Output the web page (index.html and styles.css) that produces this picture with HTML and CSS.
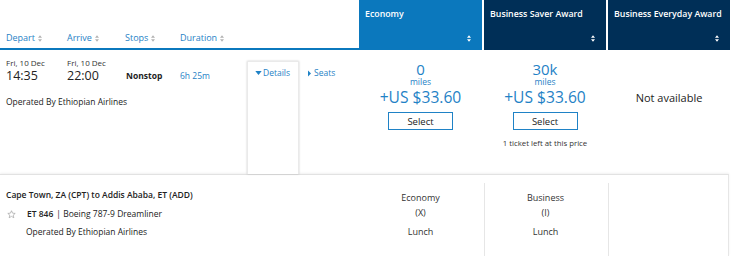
FILE: index.html
```html
<!DOCTYPE html>
<html lang="en">
<head>
    <meta charset="UTF-8">
    <meta name="viewport" content="width=device-width, initial-scale=1.0">
    <title>Flight results</title>
    <link rel="stylesheet" href="styles.css">
</head>
<body>
    <div class="results">
        <div class="head">
            <div class="sort-bar">
                <span class="sort">Depart <svg class="arrows" viewBox="0 0 5 8"><path d="M2.5 0 5 3H0zM2.5 8 0 5h5z"/></svg></span>
                <span class="sort">Arrive <svg class="arrows" viewBox="0 0 5 8"><path d="M2.5 0 5 3H0zM2.5 8 0 5h5z"/></svg></span>
                <span class="sort">Stops <svg class="arrows" viewBox="0 0 5 8"><path d="M2.5 0 5 3H0zM2.5 8 0 5h5z"/></svg></span>
                <span class="sort">Duration <svg class="arrows" viewBox="0 0 5 8"><path d="M2.5 0 5 3H0zM2.5 8 0 5h5z"/></svg></span>
            </div>
            <div class="fare-head economy">
                <span>Economy</span>
                <svg class="arrows" viewBox="0 0 5 8"><path d="M2.5 0 5 3H0zM2.5 8 0 5h5z"/></svg>
            </div>
            <div class="fare-head navy">
                <span>Business Saver Award</span>
                <svg class="arrows" viewBox="0 0 5 8"><path d="M2.5 0 5 3H0zM2.5 8 0 5h5z"/></svg>
            </div>
            <div class="fare-head navy">
                <span>Business Everyday Award</span>
                <svg class="arrows" viewBox="0 0 5 8"><path d="M2.5 0 5 3H0zM2.5 8 0 5h5z"/></svg>
            </div>
        </div>

        <div class="flight">
            <div class="info">
                <div class="time">
                    <small>Fri, 10 Dec</small>
                    <strong>14:35</strong>
                </div>
                <div class="time">
                    <small>Fri, 10 Dec</small>
                    <strong>22:00</strong>
                </div>
                <div class="stops">Nonstop</div>
                <div class="duration">6h 25m</div>
                <div class="details-tab">
                    <a class="toggle"><svg class="caret" viewBox="0 0 8 5"><path d="M0 0h8L4 5z"/></svg>Details</a>
                </div>
                <a class="toggle seats"><svg class="caret-right" viewBox="0 0 4 8"><path d="M0 0l4 4-4 4z"/></svg>Seats</a>
                <div class="operator">Operated By Ethiopian Airlines</div>
            </div>

            <div class="fare">
                <span class="miles">0</span>
                <span class="miles-label">miles</span>
                <span class="price">+US $33.60</span>
                <button class="select">Select</button>
            </div>
            <div class="fare">
                <span class="miles">30k</span>
                <span class="miles-label">miles</span>
                <span class="price">+US $33.60</span>
                <button class="select">Select</button>
                <span class="left">1 ticket left at this price</span>
            </div>
            <div class="fare unavailable">Not available</div>
        </div>

        <div class="detail">
            <div class="segment">
                <div class="route">Cape Town, ZA (CPT) to Addis Ababa, ET (ADD)</div>
                <div class="plane">
                    <svg class="star" viewBox="0 0 10 10"><path d="M5 .8l1.2 2.7 2.9.3-2.2 1.9.7 2.9L5 7.1 2.4 8.6l.7-2.9L.9 3.8l2.9-.3z"/></svg>
                    <b>ET 846</b> | Boeing 787-9 Dreamliner
                </div>
                <div class="operated">Operated By Ethiopian Airlines</div>
            </div>
            <div class="cabin">
                <span>Economy</span>
                <span>(X)</span>
                <span class="meal">Lunch</span>
            </div>
            <div class="cabin">
                <span>Business</span>
                <span>(I)</span>
                <span class="meal">Lunch</span>
            </div>
            <div class="cabin"></div>
        </div>
    </div>
</body>
</html>
```

FILE: styles.css
```css
body {
    margin: 0;
    font-family: "Open Sans", "Liberation Sans", sans-serif;
    color: #222;
    background: #fff;
}

.results {
    width: 730px;
}

.head,
.flight,
.detail {
    display: grid;
    grid-template-columns: 357px 123px 122px 122px;
    column-gap: 2px;
}

/* header */

.head {
    height: 50px;
}

.sort-bar {
    display: grid;
    grid-template-columns: 61px 58px 55px auto;
    align-items: end;
    padding: 0 0 4px 6px;
    margin-right: -2px;
    border-bottom: 2px solid #0b78bd;
}

.sort {
    font-size: 9px;
    line-height: 12px;
    color: #1f82c6;
    display: flex;
    align-items: center;
    gap: 3px;
}

.sort .arrows {
    width: 4px;
    height: 7px;
    fill: #b3b3b3;
}

.fare-head {
    color: #fff;
    font-size: 8.8px;
    font-weight: 600;
    line-height: 12px;
    white-space: nowrap;
    display: flex;
    flex-direction: column;
    justify-content: space-between;
    padding: 8px 11px 8px 6px;
}

.fare-head .arrows {
    align-self: flex-end;
    width: 4px;
    height: 7px;
    fill: #fff;
}

.economy {
    background: #0b78bd;
}

.navy {
    background: #002f57;
}

/* flight row */

.flight {
    height: 124px;
}

.info {
    display: grid;
    grid-template-columns: 61px 59px 54px 67px 52px auto;
    grid-template-rows: auto auto 1fr;
    align-items: center;
    padding: 8px 0 0 6px;
}

.time small {
    display: block;
    font-size: 8px;
    line-height: 10px;
    color: #333;
}

.time strong {
    display: block;
    font-size: 12.5px;
    font-weight: 400;
    line-height: 15px;
    color: #222;
}

.stops {
    font-size: 8.5px;
    font-weight: 700;
    padding-top: 9px;
}

.duration {
    font-size: 8.5px;
    color: #1f82c6;
    padding-top: 9px;
}

.details-tab {
    grid-row: 1 / 4;
    grid-column: 5;
    align-self: stretch;
    margin-top: 3px;
    background: #fff;
    box-shadow: 0 0 2px rgba(0, 0, 0, 0.2);
    border: 1px solid #eaeaea;
    border-bottom: 0;
    padding: 5px 0 0 7px;
}

.toggle {
    font-size: 8.5px;
    color: #1f82c6;
    display: flex;
    align-items: center;
    line-height: 12px;
}

.seats {
    align-self: start;
    margin: 9px 0 0 9px;
    gap: 3px;
}

.caret {
    width: 7px;
    height: 4px;
    fill: #1f82c6;
    margin-right: 1px;
}

.caret-right {
    width: 3px;
    height: 7px;
    fill: #1f82c6;
}

.operator {
    grid-column: 1 / 5;
    grid-row: 2;
    align-self: start;
    font-size: 8.5px;
    padding-top: 13px;
}

.fare {
    display: flex;
    flex-direction: column;
    align-items: center;
    padding-top: 11px;
    color: #1f82c6;
}

.miles {
    font-size: 15px;
    line-height: 16px;
}

.miles-label {
    font-size: 8.5px;
    line-height: 10px;
}

.price {
    font-size: 15.6px;
    line-height: 20px;
}

.select {
    margin-top: 5px;
    width: 65px;
    height: 18px;
    padding: 0;
    background: #fff;
    border: 1px solid #1f82c6;
    font-family: inherit;
    font-size: 9.5px;
    color: #222;
}

.left {
    margin-top: 8px;
    font-size: 7.8px;
    line-height: 10px;
    color: #333;
}

.unavailable {
    padding-top: 41px;
    font-size: 11px;
    line-height: 14px;
    color: #222;
}

/* detail panel */

.detail {
    height: 82px;
    border-top: 1px solid #e2e2e2;
    box-shadow: 0 -1px 2px rgba(0, 0, 0, 0.06);
    width: 729px;
    border-right: 1px solid #e6e6e6;
    box-sizing: border-box;
    padding-top: 8px;
}

.segment {
    padding: 6px 0 0 6px;
    font-size: 8.5px;
}

.route {
    font-weight: 600;
    line-height: 12px;
}

.plane {
    display: flex;
    align-items: center;
    margin-top: 7px;
    line-height: 12px;
    gap: 3px;
}

.plane b {
    font-weight: 600;
}

.star {
    width: 9px;
    height: 9px;
    fill: none;
    stroke: #999;
    stroke-width: 0.7;
    margin: 0 8px 0 1px;
}

.operated {
    margin: 6px 0 0 20px;
    line-height: 12px;
}

.cabin {
    display: flex;
    flex-direction: column;
    align-items: center;
    font-size: 9px;
    line-height: 15px;
    color: #333;
    padding-top: 7px;
    border-left: 1px solid #e6e6e6;
}

.cabin:nth-child(2) {
    border-left: 0;
}

.cabin:last-child {
    margin-right: -2px;
}

.meal {
    margin-top: 4px;
}
```
